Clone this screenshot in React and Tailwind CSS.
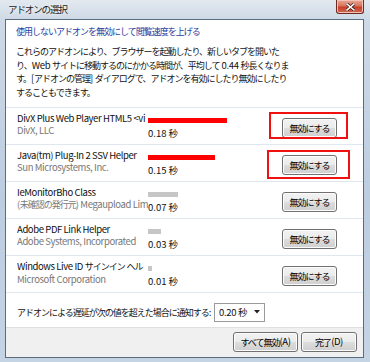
import React from 'react';

// Japanese runs get narrower spacing so lines keep the reference's widths
const Jp = ({ text }) =>
  text.split(/([\u3000-\u30ff\u4e00-\u9fff\uff00-\uffef]+)/).map((s, i) =>
    i % 2 ? (
      <span key={i} className="text-[9px] tracking-[-1px]">
        {s}
      </span>
    ) : (
      <span key={i}>{s}</span>
    )
  );

const addons = [
  { name: 'DivX Plus Web Player HTML5 <vi', company: 'DivX, LLC', time: '0.18 秒', bar: 79, red: true, mark: 'a' },
  { name: 'Java(tm) Plug-In 2 SSV Helper', company: 'Sun Microsystems, Inc.', time: '0.15 秒', bar: 67, red: true, mark: 'b' },
  { name: 'IeMonitorBho Class', company: '(未確認の発行元) Megaupload Lim', time: '0.07 秒', bar: 30 },
  { name: 'Adobe PDF Link Helper', company: 'Adobe Systems, Incorporated', time: '0.03 秒', bar: 13 },
  { name: 'Windows Live ID サインイン ヘル', company: 'Microsoft Corporation', time: '0.01 秒', bar: 4 },
];

const WinButton = ({ children, className = '' }) => (
  <div
    className={`flex items-center justify-center rounded-[3px] border border-[#707070] bg-[linear-gradient(#f2f2f2_0%,#ebebeb_50%,#dddddd_50%,#cfcfcf_100%)] text-[9.5px] leading-none tracking-[-0.4px] text-black shadow-[inset_0_0_0_1px_#fcfcfc] ${className}`}
  >
    <Jp text={children} />
  </div>
);

const AddonRow = ({ addon }) => (
  <div className="relative flex h-[37px] border-b border-[#dfe7f0] pl-[11px]">
    <div className="w-[131px] overflow-hidden whitespace-nowrap pt-[4px] text-[9.5px] leading-[12px] tracking-[-0.4px]">
      <div className="text-[#111]">
        <Jp text={addon.name} />
      </div>
      <div className="text-[#777]">
        <Jp text={addon.company} />
      </div>
    </div>
    <div className="w-[100px] pt-[10px]">
      <div
        className={`h-[5px] ${addon.red ? 'bg-[#ff0000]' : 'bg-[#c6c6c6]'}`}
        style={{ width: addon.bar }}
      />
      <div className="mt-[4px] text-[9.5px] leading-[12px] text-[#111]">{addon.time}</div>
    </div>
    <div className="ml-auto mr-[26px] pt-[10px]">
      <WinButton className="h-[20px] w-[55px]">無効にする</WinButton>
    </div>

    {/* red annotation boxes */}
    {addon.mark === 'a' && (
      <div className="absolute left-[263px] top-[4px] h-[27px] w-[79px] border-2 border-[#f01010]" />
    )}
    {addon.mark === 'b' && (
      <div className="absolute left-[261px] top-[5px] h-[29px] w-[83px] border-2 border-[#f01010]" />
    )}
  </div>
);

export default function App() {
  return (
    <div className="relative h-[362px] w-[370px] overflow-hidden bg-[linear-gradient(180deg,#e3e9ef_0px,#cdd9e6_20px,#bccde0_200px,#c5d4e4_362px)] font-['Noto_Sans_CJK_JP','Noto_Sans',sans-serif]">
      {/* Title bar */}
      <div className="flex h-[19px] items-center pl-[8px] text-[9.5px] tracking-[-1.1px] text-[#1b1b1b] [text-shadow:0_0_4px_#ffffff]">
        アドオンの選択
      </div>
      <div className="absolute left-[336px] top-0 flex h-[14px] w-[28px] items-center justify-center rounded-b-[3px] border border-t-0 border-[#6a2c22] bg-[linear-gradient(#e9a896_0%,#d9735c_45%,#c5402a_55%,#d6664f_100%)] shadow-[inset_0_0_0_1px_#f3c2b4]">
        <svg width="9" height="8" viewBox="0 0 9 8">
          <path d="M1 1 L8 7 M8 1 L1 7" stroke="#3b1410" strokeWidth="3" strokeLinecap="square" />
          <path d="M1 1 L8 7 M8 1 L1 7" stroke="#ffffff" strokeWidth="1.6" strokeLinecap="square" />
        </svg>
      </div>

      {/* Client area */}
      <div className="ml-[5px] flex h-[339px] w-[359px] flex-col border border-[#5b6b80] bg-white">
        <div className="px-[10px] pt-[5px]">
          <div className="whitespace-nowrap text-[9px] leading-[14px] tracking-[-1px] text-[#1f3c9e]">
            使用しないアドオンを無効にして閲覧速度を上げる
          </div>
          <div className="mt-[6px] whitespace-nowrap text-[9.5px] leading-[13.5px] tracking-[-0.3px] text-[#111]">
            <div>
              <Jp text="これらのアドオンにより、ブラウザーを起動したり、新しいタブを開いた" />
            </div>
            <div>
              <Jp text="り、Web サイトに移動するのにかかる時間が、平均して 0.44 秒長くなりま" />
            </div>
            <div>
              <Jp text="す。[アドオンの管理] ダイアログで、アドオンを有効にしたり無効にしたり" />
            </div>
            <div>
              <Jp text="することもできます。" />
            </div>
          </div>
        </div>

        <div className="mt-[8px] border-t border-[#dfe7f0]">
          {addons.map((a) => (
            <AddonRow key={a.name} addon={a} />
          ))}
        </div>

        <div className="flex h-[34px] items-center pl-[11px] pt-[4px] text-[9.5px] tracking-[-0.3px] text-[#111]">
          <span className="w-[197px] whitespace-nowrap">
            <Jp text="アドオンによる遅延が次の値を超えた場合に通知する:" />
          </span>
          <div className="flex h-[19px] w-[51px] items-center justify-between border border-[#9a9a9a] bg-white pl-[4px] pr-[4px]">
            <span>0.20 秒</span>
            <svg width="6" height="4" viewBox="0 0 6 4">
              <path d="M0 0 H6 L3 3.5 Z" fill="#222" />
            </svg>
          </div>
        </div>

        <div className="flex flex-1 justify-end gap-[3px] border-t border-[#dfdfdf] bg-[#f0f0f0] pr-[6px] pt-[4px]">
          <WinButton className="h-[20px] w-[65px]">すべて無効(A)</WinButton>
          <WinButton className="h-[20px] w-[56px]">完了(D)</WinButton>
        </div>
      </div>
    </div>
  );
}
